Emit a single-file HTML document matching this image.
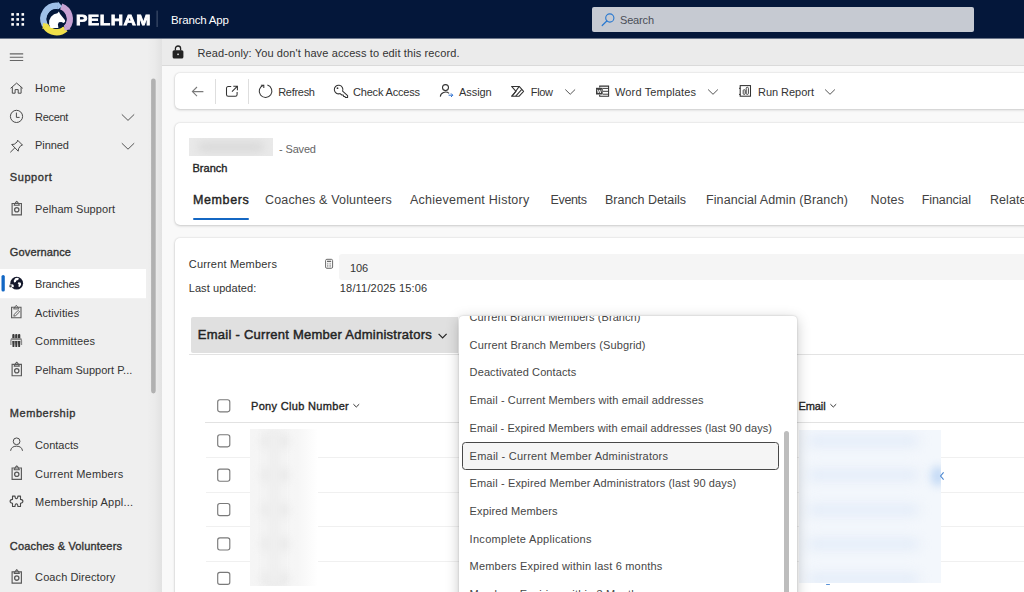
<!DOCTYPE html>
<html lang="en"><head><meta charset="utf-8"><title>Branch App</title>
<style>
html,body{margin:0;padding:0;}
body{width:1024px;height:592px;overflow:hidden;position:relative;background:#f9f9f9;font-family:"Liberation Sans",sans-serif;}
#root{position:absolute;left:0;top:0;width:1024px;height:592px;overflow:hidden;}
.t{position:absolute;white-space:pre;}
.a{position:absolute;}
.card{position:absolute;background:#fff;border-radius:5px;box-shadow:0 0 2px rgba(0,0,0,.14),0 1px 3px rgba(0,0,0,.16);}
svg{position:absolute;overflow:visible;}
.hl{position:absolute;height:1px;background:#f0f0f0;}
</style></head><body><div id="root">

<!-- main background areas -->
<div class="a" style="left:0;top:38px;width:161.5px;height:554px;background:#efefef;"></div>
<div class="a" style="left:147px;top:39px;width:14.5px;height:553px;background:linear-gradient(90deg,#efefef,#ebebeb 50%,#e2e2e2);"></div>
<div class="a" style="left:161.5px;top:38px;width:863px;height:27px;background:#ebebeb;border-bottom:1px solid #dadada;"></div>

<!-- top bar -->
<div class="a" style="left:0;top:0;width:1024px;height:38px;background:#04173a;"></div><div class="a" style="left:0;top:38px;width:1024px;height:1px;background:#6a7589;"></div>
<svg style="left:0;top:0" width="160" height="39" viewBox="0 0 160 39">
 <g fill="#fff">
  <rect x="11.3" y="13.1" width="2.6" height="2.6"/><rect x="16.4" y="13.1" width="2.6" height="2.6"/><rect x="21.5" y="13.1" width="2.6" height="2.6"/>
  <rect x="11.3" y="18.1" width="2.6" height="2.6"/><rect x="16.4" y="18.1" width="2.6" height="2.6"/><rect x="21.5" y="18.1" width="2.6" height="2.6"/>
  <rect x="11.3" y="23.1" width="2.6" height="2.6"/><rect x="16.4" y="23.1" width="2.6" height="2.6"/><rect x="21.5" y="23.1" width="2.6" height="2.6"/>
 </g>
 
<g fill="none" stroke-width="6.4">
 <path d="M44.95 25.20A13.2 13.2 0 0 1 57.98 5.87" stroke="#9fc0e8"/>
 <path d="M61.11 6.60A13.2 13.2 0 0 1 67.00 27.13" stroke="#c7a2d3"/>
 <path d="M65.43 28.81A13.2 13.2 0 0 1 45.66 26.38" stroke="#efe04a"/>
</g>
<path d="M57.83 1.44L62.11 6.15L57.21 10.22Z" fill="#9fc0e8"/>
<path d="M70.84 29.35L64.58 30.48L63.72 24.17Z" fill="#c7a2d3"/>
<path d="M42.36 29.35L43.22 23.04L49.48 24.17Z" fill="#efe04a"/>
<circle cx="56.6" cy="19" r="9.9" fill="#04173a"/>
<path d="M58.9 11.4L60.1 14L64.9 20.1L65.2 21.6L63.8 22.9L61.3 22.1L58.9 22.3L57.9 24.2L58.4 28L50.6 28L49.1 24.4L49.2 20.4L51 16.8L54 14.2L57.4 13.3Z" fill="#fff"/>

 <rect x="156.6" y="10.6" width="1" height="16.4" fill="#4a5873"/>
</svg>
<svg style="left:172px;top:45px" width="12" height="14" viewBox="0 0 12 14"><rect x=".6" y="5.2" width="10.8" height="8.4" rx="1.6" fill="#222"/><path d="M3.4 5.6V3.6a2.6 2.6 0 0 1 5.2 0V5.6" fill="none" stroke="#222" stroke-width="1.3"/><rect x="5.3" y="8.6" width="1.5" height="1.5" fill="#ebebeb"/></svg>
<!-- search -->
<div class="a" style="left:592px;top:7px;width:381.5px;height:25px;background:#c6cad2;border-radius:2px;"></div>
<svg style="left:600px;top:12px" width="16" height="16" viewBox="0 0 16 16"><circle cx="9.8" cy="6" r="4.1" fill="none" stroke="#2878d0" stroke-width="1.1"/><path d="M6.8 9 L2.2 13.5" stroke="#2878d0" stroke-width="1.2" stroke-linecap="round"/></svg>

<!-- nav -->
<svg style="left:0;top:39px" width="161" height="553" viewBox="0 39 161 553">
 <g stroke="#666" stroke-width="1.1" fill="none">
  <path d="M9.8 53.9H23.2M9.8 57.2H23.2M9.8 60.5H23.2"/>
 </g>
 <!-- selected row -->
 <rect x="0" y="269" width="146" height="29.2" fill="#fff"/>
 <rect x="1.5" y="275" width="3.3" height="16.6" rx="1.6" fill="#1267c4"/>
 <!-- scrollbar -->
 <rect x="151.1" y="78.4" width="4.6" height="315" rx="2.3" fill="#b1b1b1"/>
 
<g fill="none" stroke="#4a4a4a" stroke-width="1" stroke-linejoin="round">
<!-- home -->
<path d="M10.6 88.3L16.6 83.1L22.7 88.3"/>
<path d="M12.3 87.2V93.2H15.1V89.6H18.2V93.2H21.1V87.2"/>
<!-- clock -->
<circle cx="16.5" cy="116.4" r="6.1"/>
<path d="M16.4 112.6V117.4H19.6"/>
<!-- pin -->
<path d="M17.6 140.2L22.5 145.1L20.8 145.6L18.6 148.6L18.2 151.2L11.7 144.5L14.3 144.2L17.2 141.9Z"/>
<path d="M14.8 147.9L10.3 152.3"/>
</g>
<path d="M121.80 114.40L128.00 120.40L134.20 114.40" fill="none" stroke="#555" stroke-width="1"/>
<path d="M121.80 143.20L128.00 149.20L134.20 143.20" fill="none" stroke="#555" stroke-width="1"/>
<g fill="none" stroke="#5a5a5a" stroke-width="1.15" stroke-linejoin="miter">
<path d="M12.1 203.50V214.80H21.4V203.50Z"/>
<path d="M13.7 205.20H19.8M14.2 205.00L15.5 202.70L16.75 201.30L18 202.70L19.3 205.00" stroke-linejoin="round" stroke-width="1.05"/>
<circle cx="16.75" cy="209.80" r="2.15" stroke-width="1.3"/>
</g>
<g fill="none" stroke="#5a5a5a" stroke-width="1.15" stroke-linejoin="miter">
<path d="M12.1 364.40V375.70H21.4V364.40Z"/>
<path d="M13.7 366.10H19.8M14.2 365.90L15.5 363.60L16.75 362.20L18 363.60L19.3 365.90" stroke-linejoin="round" stroke-width="1.05"/>
<circle cx="16.75" cy="370.70" r="2.15" stroke-width="1.3"/>
</g>
<g fill="none" stroke="#5a5a5a" stroke-width="1.15" stroke-linejoin="miter">
<path d="M12.1 468.00V479.30H21.4V468.00Z"/>
<path d="M13.7 469.70H19.8M14.2 469.50L15.5 467.20L16.75 465.80L18 467.20L19.3 469.50" stroke-linejoin="round" stroke-width="1.05"/>
<circle cx="16.75" cy="474.30" r="2.15" stroke-width="1.3"/>
</g>
<g fill="none" stroke="#5a5a5a" stroke-width="1.15" stroke-linejoin="miter">
<path d="M12.1 571.80V583.10H21.4V571.80Z"/>
<path d="M13.7 573.50H19.8M14.2 573.30L15.5 571.00L16.75 569.60L18 571.00L19.3 573.30" stroke-linejoin="round" stroke-width="1.05"/>
<circle cx="16.75" cy="578.10" r="2.15" stroke-width="1.3"/>
</g>
<!-- globe -->
<circle cx="16.7" cy="283.2" r="6.4" fill="#14182b"/>
<path d="M15.2 278.3l2.2-.6 1.6.9-.9 1.5-1.7.5-.6 1.5-1.7.3-.4-1.6zM18.6 282.2l2.2.5.3 2-1.5 2.3-1.2-.6.3-1.9-1-1.2zM11.2 284.2l2 .4.8 1.7-1 1.1-1.5-1z" fill="#fff"/>
<path d="M9.6 284.6l1.5 1.2-.3 1.8-1.4-.6z" fill="#333"/>
<!-- activities -->
<g fill="none" stroke="#5a5a5a" stroke-width="1.1" stroke-linejoin="round">
<path d="M11.6 307.3V317.8H21V307.3Z" stroke-linejoin="miter"/>
<path d="M13.4 308.9H19.2M13.9 308.7L15.2 306.6L16.3 305.3L17.4 306.6L18.7 308.7" stroke-width="1"/>
<path d="M13.8 316.2l.5-1.9 3.9-3.9 1.4 1.4-3.9 3.9z" stroke-width=".95"/>
</g>
<!-- committees -->
<g fill="#3a3a3a">
<rect x="12.3" y="334" width="2.3" height="4.8" rx=".9"/><rect x="15.15" y="334" width="2.3" height="4.8" rx=".9"/><rect x="18" y="334" width="2.3" height="4.8" rx=".9"/>
<path d="M12.2 340.9h2.5l-.35 6h-1.8zM15.05 340.9h2.5l-.35 6h-1.8zM17.9 340.9h2.5l-.35 6h-1.8z"/>
</g>
<path d="M10.9 345V340.4a1.6 1.6 0 0 1 1.6-1.6H19.9a1.6 1.6 0 0 1 1.6 1.6V345" fill="none" stroke="#8c8c8c" stroke-width="1.3"/>
<rect x="11" y="338.3" width="10.4" height="1.8" fill="#8c8c8c"/>
<!-- person -->
<g fill="none" stroke="#4a4a4a" stroke-width="1">
<circle cx="16.6" cy="441.3" r="3.35"/>
<path d="M10.6 450.8a6 5.3 0 0 1 11.9 0"/>
<!-- puzzle -->
<path d="M12.5 496.1H15Q15 498.7 16.4 498.8Q17.9 498.7 17.9 496.1H20.5V499.4Q22.9 499.5 22.9 501.3Q22.9 503.1 20.5 503.2V506.5H17.9Q17.9 503.9 16.4 503.8Q15 503.9 15 506.5H12.5V503.2Q10.1 503.1 10.1 501.3Q10.1 499.5 12.5 499.4Z" stroke-linejoin="round" stroke-width="1.1"/>
</g>

</svg>

<!-- command bar -->
<div class="card" style="left:174.5px;top:72.7px;width:870px;height:36.2px;"></div>
<div class="a" style="left:215.3px;top:78.5px;width:1px;height:25.5px;background:#dedede;"></div>
<div class="a" style="left:248px;top:78.5px;width:1px;height:25.5px;background:#dedede;"></div>
<svg style="left:161px;top:72px" width="863" height="38" viewBox="161 72 863 38">

<g fill="none" stroke="#7a7a7a" stroke-width="1.1"><path d="M203.4 91.6H192.4M197 87L192.4 91.6L197 96.2"/></g>
<g fill="none" stroke="#333" stroke-width="1.05">
<!-- popout -->
<path d="M231.2 86.5H228.2a1.7 1.7 0 0 0-1.7 1.7V94.6a1.7 1.7 0 0 0 1.7 1.7H235.4a1.7 1.7 0 0 0 1.7-1.7V92"/>
<path d="M233.3 86.2H237.4V90.3M237.2 86.4L232 91.6"/>
<!-- refresh -->
<path d="M267.4 85.1A6.35 6.35 0 1 1 263.4 85.2"/>
<path d="M260.9 85.3H263.8V88.1"/>
<!-- key -->
<path d="M340.1 93.6A4.3 4.3 0 1 1 342.6 91.2L347.6 95.6V97.4H345.4L344.9 96.4H343.6L343.2 95H341.8Z" stroke-linejoin="round"/>
<circle cx="337.5" cy="88.2" r=".9" fill="#333" stroke="none"/>
<!-- assign -->
<circle cx="445.5" cy="87.6" r="3"/>
<path d="M440.3 96.6a5.3 4.7 0 0 1 8.8-3.3"/>
<!-- flow -->
<path d="M511.6 86.4H519.2L523.6 91.3L519.2 96.2H511.6L516 91.3Z" stroke-linejoin="round"/>
<path d="M519.2 86.4L512.4 96M521.8 89.3L515.7 96.2"/>
<!-- word -->
<path d="M599.7 87.6V86.1H608.6V96.2H599.7V94.7" stroke-linejoin="miter"/>
<path d="M603 88.4H608.4M603 91.3H608.4M603 94.2H608.4" stroke-width=".95"/>
<rect x="596" y="87.8" width="6.7" height="6.7" fill="#3c3c3c" stroke="none"/>
<path d="M597.3 89.6l.9 3.4 1.1-3.1 1.1 3.1.9-3.4" stroke="#fff" stroke-width=".8" stroke-linejoin="round"/>
<!-- report -->
<rect x="740.2" y="85.6" width="10.3" height="10.6"/>
<path d="M739 88.3H740.4M739 94.4H740.4" stroke-width="1"/>
<rect x="743.2" y="89.7" width="2" height="4.7" rx=".9" stroke-width=".9"/><rect x="746.2" y="87.3" width="2.2" height="7.1" rx="1" stroke-width=".9"/>
</g>
<path d="M448.6 95.2H452.6M451 93.4L452.8 95.2L451 97" fill="none" stroke="#2b6fd0" stroke-width="1"/>
<path d="M565.30 89.50L570.20 94.30L575.10 89.50" fill="none" stroke="#555" stroke-width="1"/>
<path d="M708.10 89.50L713.00 94.30L717.90 89.50" fill="none" stroke="#555" stroke-width="1"/>
<path d="M825.10 89.50L830.00 94.30L834.90 89.50" fill="none" stroke="#555" stroke-width="1"/>

</svg>

<!-- header card -->
<div class="card" style="left:174.5px;top:122.5px;width:870px;height:102px;"></div>
<div class="a" style="left:188.7px;top:138.1px;width:84.8px;height:17.5px;background:#e9e9e9;overflow:hidden;"><div class="a" style="left:9px;top:4px;width:66px;height:9.5px;background:#d9d9d9;filter:blur(4px);border-radius:6px;"></div></div>
<div class="a" style="left:193px;top:217.9px;width:56px;height:2.6px;background:#1467c3;border-radius:1.3px;"></div>

<!-- body card -->
<div class="card" style="left:174.5px;top:238.3px;width:870px;height:380px;"></div>
<div class="a" style="left:339.3px;top:254.1px;width:700px;height:25.6px;background:#f5f5f5;border-radius:3px;"></div>
<svg style="left:324px;top:258px" width="12" height="12" viewBox="0 0 12 12"><rect x="1.6" y="1.3" width="7" height="9" rx="1.3" fill="none" stroke="#6a6a6a" stroke-width="1"/><rect x="3" y="2.7" width="4.2" height="1.4" fill="#6a6a6a"/><path d="M3.1 5.8h.9M4.65 5.8h.9M6.2 5.8h.9M3.1 7.3h.9M4.65 7.3h.9M6.2 7.3h.9M3.1 8.8h.9M4.65 8.8h.9M6.2 8.8h.9" stroke="#6a6a6a" stroke-width=".8"/></svg>
<div class="a" style="left:191.1px;top:317px;width:266.7px;height:35.5px;background:#e0e0e0;border-radius:2px 0 0 2px;"></div>
<svg style="left:436px;top:329px" width="13" height="13" viewBox="0 0 13 13"><path d="M2.6 4.8 L6.6 8.8 L10.6 4.8" fill="none" stroke="#242424" stroke-width="1.2"/></svg>
<div class="hl" style="left:189px;top:354.1px;width:840px;background:#e3e3e3;"></div>

<!-- grid -->
<svg style="left:352px;top:401px" width="9" height="9" viewBox="0 0 9 9"><path d="M1.4 3.2 L4.3 6 L7.2 3.2" fill="none" stroke="#333" stroke-width="1"/></svg>
<svg style="left:829px;top:401px" width="9" height="9" viewBox="0 0 9 9"><path d="M1.4 3.2 L4.3 6 L7.2 3.2" fill="none" stroke="#333" stroke-width="1"/></svg>
<div class="hl" style="left:205px;top:422.3px;width:830px;background:#e2e2e2;"></div>
<div class="hl" style="left:206px;top:457.4px;width:830px;"></div>
<div class="hl" style="left:206px;top:491.8px;width:830px;"></div>
<div class="hl" style="left:206px;top:526.2px;width:830px;"></div>
<div class="hl" style="left:206px;top:560.6px;width:830px;"></div>
<svg style="left:0;top:0" width="1024" height="592" viewBox="0 0 1024 592"><rect x="217.7" y="399.7" width="12.1" height="12.1" rx="2.2" fill="#fff" stroke="#7a7a7a" stroke-width="1.15"/><rect x="217.7" y="434.7" width="12.1" height="12.1" rx="2.2" fill="#fff" stroke="#7a7a7a" stroke-width="1.15"/><rect x="217.7" y="469.1" width="12.1" height="12.1" rx="2.2" fill="#fff" stroke="#7a7a7a" stroke-width="1.15"/><rect x="217.7" y="503.5" width="12.1" height="12.1" rx="2.2" fill="#fff" stroke="#7a7a7a" stroke-width="1.15"/><rect x="217.7" y="537.9" width="12.1" height="12.1" rx="2.2" fill="#fff" stroke="#7a7a7a" stroke-width="1.15"/><rect x="217.7" y="572.3" width="12.1" height="12.1" rx="2.2" fill="#fff" stroke="#7a7a7a" stroke-width="1.15"/></svg>
<!-- blurred columns -->
<div class="a" style="left:249.6px;top:429.3px;width:68px;height:157px;background:linear-gradient(90deg,#f5f5f5 0,#f6f6f6 70%,#fcfcfc 90%,#fff 100%);overflow:hidden;">
<div class="a" style="left:12px;top:4.7px;width:26px;height:14px;border-radius:7px;background:#e6e6e6;filter:blur(4px);"></div>
<div class="a" style="left:12px;top:39.1px;width:26px;height:14px;border-radius:7px;background:#e6e6e6;filter:blur(4px);"></div>
<div class="a" style="left:12px;top:73.5px;width:26px;height:14px;border-radius:7px;background:#e6e6e6;filter:blur(4px);"></div>
<div class="a" style="left:12px;top:107.9px;width:26px;height:14px;border-radius:7px;background:#e6e6e6;filter:blur(4px);"></div>
<div class="a" style="left:12px;top:142.3px;width:26px;height:14px;border-radius:7px;background:#e6e6e6;filter:blur(4px);"></div>
<div class="a" style="left:16px;top:0;width:16px;height:157px;background:#efefef;filter:blur(5px);"></div>
</div>
<div class="a" style="left:798.7px;top:430.2px;width:142px;height:153.2px;background:#f3f7fc;overflow:hidden;">
<div class="a" style="left:8px;top:5.8px;width:112px;height:10px;border-radius:5px;background:#e2ebf8;filter:blur(6px);"></div>
<div class="a" style="left:8px;top:40.2px;width:112px;height:10px;border-radius:5px;background:#e2ebf8;filter:blur(6px);"></div>
<div class="a" style="left:8px;top:74.6px;width:112px;height:10px;border-radius:5px;background:#e2ebf8;filter:blur(6px);"></div>
<div class="a" style="left:8px;top:109.0px;width:112px;height:10px;border-radius:5px;background:#e2ebf8;filter:blur(6px);"></div>
<div class="a" style="left:8px;top:143.4px;width:112px;height:10px;border-radius:5px;background:#e2ebf8;filter:blur(6px);"></div>
<div class="a" style="left:132px;top:36px;width:14px;height:20px;border-radius:7px;background:#c4daf5;filter:blur(4px);"></div>
</div>
<svg style="left:938px;top:470px" width="8" height="12" viewBox="0 0 8 12"><path d="M5.6 2.4L2.6 6L5.6 9.6" fill="none" stroke="#4a86d0" stroke-width="1.1"/></svg>
<div class="a" style="left:826px;top:583.6px;width:4px;height:1.4px;background:#5b93d8;border-radius:1px;"></div>

<span class="t" style="left:76.00px;top:9.00px;font-size:15.5px;line-height:21px;font-weight:700;color:#fff;letter-spacing:0.455px;-webkit-text-stroke:0.8px #fff;transform-origin:0 50%;transform:scaleX(1.1);">PELHAM</span>
<span class="t" style="left:171.00px;top:12.00px;font-size:11.5px;line-height:16px;font-weight:400;color:#fff;letter-spacing:-0.163px;">Branch App</span>
<span class="t" style="left:620.00px;top:13.00px;font-size:11px;line-height:15px;font-weight:400;color:#4a4e58;letter-spacing:-0.172px;">Search</span>
<span class="t" style="left:197.40px;top:46.00px;font-size:11px;line-height:15px;font-weight:400;color:#333;letter-spacing:0.120px;">Read-only: You don't have access to edit this record.</span>
<span class="t" style="left:278.20px;top:85.00px;font-size:11px;line-height:15px;font-weight:400;color:#333;letter-spacing:-0.289px;">Refresh</span>
<span class="t" style="left:353.00px;top:85.00px;font-size:11px;line-height:15px;font-weight:400;color:#333;letter-spacing:-0.190px;">Check Access</span>
<span class="t" style="left:459.00px;top:85.00px;font-size:11px;line-height:15px;font-weight:400;color:#333;letter-spacing:-0.056px;">Assign</span>
<span class="t" style="left:530.75px;top:85.00px;font-size:11px;line-height:15px;font-weight:400;color:#333;letter-spacing:-0.328px;">Flow</span>
<span class="t" style="left:615.00px;top:85.00px;font-size:11px;line-height:15px;font-weight:400;color:#333;letter-spacing:0.148px;">Word Templates</span>
<span class="t" style="left:758.00px;top:85.00px;font-size:11px;line-height:15px;font-weight:400;color:#333;letter-spacing:-0.030px;">Run Report</span>
<span class="t" style="left:279.10px;top:142.00px;font-size:11px;line-height:15px;font-weight:400;color:#666;letter-spacing:-0.170px;">- Saved</span>
<span class="t" style="left:192.40px;top:161.00px;font-size:11px;line-height:15px;font-weight:400;color:#242424;letter-spacing:0.048px;-webkit-text-stroke:0.35px currentColor;">Branch</span>
<span class="t" style="left:193.00px;top:192.00px;font-size:12.5px;line-height:17px;font-weight:400;color:#242424;letter-spacing:0.609px;-webkit-text-stroke:0.4px currentColor;">Members</span>
<span class="t" style="left:265.00px;top:192.00px;font-size:12.5px;line-height:17px;font-weight:400;color:#424242;letter-spacing:0.160px;">Coaches &amp; Volunteers</span>
<span class="t" style="left:410.00px;top:192.00px;font-size:12.5px;line-height:17px;font-weight:400;color:#424242;letter-spacing:0.257px;">Achievement History</span>
<span class="t" style="left:550.50px;top:192.00px;font-size:12.5px;line-height:17px;font-weight:400;color:#424242;letter-spacing:-0.344px;">Events</span>
<span class="t" style="left:605.00px;top:192.00px;font-size:12.5px;line-height:17px;font-weight:400;color:#424242;letter-spacing:-0.023px;">Branch Details</span>
<span class="t" style="left:706.00px;top:192.00px;font-size:12.5px;line-height:17px;font-weight:400;color:#424242;letter-spacing:0.102px;">Financial Admin (Branch)</span>
<span class="t" style="left:870.50px;top:192.00px;font-size:12.5px;line-height:17px;font-weight:400;color:#424242;letter-spacing:0.211px;">Notes</span>
<span class="t" style="left:921.75px;top:192.00px;font-size:12.5px;line-height:17px;font-weight:400;color:#424242;letter-spacing:-0.098px;">Financial</span>
<span class="t" style="left:990.00px;top:192.00px;font-size:12.5px;line-height:17px;font-weight:400;color:#424242;letter-spacing:0.068px;">Related</span>
<span class="t" style="left:188.75px;top:257.00px;font-size:11px;line-height:15px;font-weight:400;color:#333;letter-spacing:0.184px;">Current Members</span>
<span class="t" style="left:350.00px;top:261.00px;font-size:11px;line-height:15px;font-weight:400;color:#333;letter-spacing:-0.180px;">106</span>
<span class="t" style="left:188.75px;top:281.00px;font-size:11px;line-height:15px;font-weight:400;color:#333;letter-spacing:0.069px;">Last updated:</span>
<span class="t" style="left:339.80px;top:281.00px;font-size:11px;line-height:15px;font-weight:400;color:#333;letter-spacing:0.175px;">18/11/2025 15:06</span>
<span class="t" style="left:197.80px;top:326.00px;font-size:13px;line-height:18px;font-weight:400;color:#242424;letter-spacing:0.258px;-webkit-text-stroke:0.45px currentColor;">Email - Current Member Administrators</span>
<span class="t" style="left:251.00px;top:399.00px;font-size:11px;line-height:15px;font-weight:400;color:#242424;letter-spacing:0.321px;-webkit-text-stroke:0.35px currentColor;">Pony Club Number</span>
<span class="t" style="left:798.50px;top:399.00px;font-size:11px;line-height:15px;font-weight:400;color:#242424;letter-spacing:-0.104px;-webkit-text-stroke:0.35px currentColor;">Email</span>
<span class="t" style="left:35.10px;top:81.00px;font-size:11px;line-height:15px;font-weight:400;color:#333;letter-spacing:0.285px;">Home</span>
<span class="t" style="left:35.10px;top:110.00px;font-size:11px;line-height:15px;font-weight:400;color:#333;letter-spacing:-0.312px;">Recent</span>
<span class="t" style="left:35.10px;top:138.00px;font-size:11px;line-height:15px;font-weight:400;color:#333;letter-spacing:-0.073px;">Pinned</span>
<span class="t" style="left:9.80px;top:170.00px;font-size:11px;line-height:15px;font-weight:400;color:#333;letter-spacing:0.578px;-webkit-text-stroke:0.35px currentColor;">Support</span>
<span class="t" style="left:35.10px;top:202.00px;font-size:11px;line-height:15px;font-weight:400;color:#333;letter-spacing:0.078px;">Pelham Support</span>
<span class="t" style="left:9.80px;top:245.00px;font-size:11px;line-height:15px;font-weight:400;color:#333;letter-spacing:0.140px;-webkit-text-stroke:0.35px currentColor;">Governance</span>
<span class="t" style="left:35.10px;top:277.00px;font-size:11px;line-height:15px;font-weight:400;color:#333;letter-spacing:-0.255px;">Branches</span>
<span class="t" style="left:35.10px;top:306.00px;font-size:11px;line-height:15px;font-weight:400;color:#333;letter-spacing:0.088px;">Activities</span>
<span class="t" style="left:35.10px;top:334.00px;font-size:11px;line-height:15px;font-weight:400;color:#333;letter-spacing:0.135px;">Committees</span>
<span class="t" style="left:35.10px;top:363.00px;font-size:11px;line-height:15px;font-weight:400;color:#333;letter-spacing:0.009px;">Pelham Support P...</span>
<span class="t" style="left:9.80px;top:406.00px;font-size:11px;line-height:15px;font-weight:400;color:#333;letter-spacing:0.552px;-webkit-text-stroke:0.35px currentColor;">Membership</span>
<span class="t" style="left:35.10px;top:438.00px;font-size:11px;line-height:15px;font-weight:400;color:#333;letter-spacing:0.011px;">Contacts</span>
<span class="t" style="left:35.10px;top:467.00px;font-size:11px;line-height:15px;font-weight:400;color:#333;letter-spacing:0.180px;">Current Members</span>
<span class="t" style="left:35.10px;top:495.00px;font-size:11px;line-height:15px;font-weight:400;color:#333;letter-spacing:0.220px;">Membership Appl...</span>
<span class="t" style="left:9.80px;top:539.00px;font-size:11px;line-height:15px;font-weight:400;color:#333;letter-spacing:0.176px;-webkit-text-stroke:0.35px currentColor;">Coaches &amp; Volunteers</span>
<span class="t" style="left:35.10px;top:570.00px;font-size:11px;line-height:15px;font-weight:400;color:#333;letter-spacing:0.089px;">Coach Directory</span>


<!-- popup -->
<div class="a" style="left:459.2px;top:315.5px;width:337.8px;height:300px;background:#fff;border-radius:4px;box-shadow:0 0 2px rgba(0,0,0,.22),0 3px 14px rgba(0,0,0,.22);overflow:hidden;">
 <div class="a" style="left:-459.2px;top:-315.5px;width:1024px;height:700px;">
  <div class="a" style="left:462.3px;top:442px;width:314.6px;height:26px;border:1px solid #484848;border-radius:3.5px;background:#f5f5f5;"></div>
  <div class="a" style="left:784.3px;top:430.7px;width:4.9px;height:200px;background:#bdbdbd;border-radius:2.5px;"></div>
<span class="t" style="left:469.60px;top:310.00px;font-size:11px;line-height:15px;font-weight:400;color:#464646;letter-spacing:0.072px;">Current Branch Members (Branch)</span>
<span class="t" style="left:469.60px;top:338.00px;font-size:11px;line-height:15px;font-weight:400;color:#464646;letter-spacing:0.132px;">Current Branch Members (Subgrid)</span>
<span class="t" style="left:469.60px;top:365.00px;font-size:11px;line-height:15px;font-weight:400;color:#464646;letter-spacing:0.112px;">Deactivated Contacts</span>
<span class="t" style="left:469.60px;top:393.00px;font-size:11px;line-height:15px;font-weight:400;color:#464646;letter-spacing:0.122px;">Email - Current Members with email addresses</span>
<span class="t" style="left:469.60px;top:421.00px;font-size:11px;line-height:15px;font-weight:400;color:#464646;letter-spacing:0.070px;">Email - Expired Members with email addresses (last 90 days)</span>
<span class="t" style="left:469.60px;top:449.00px;font-size:11px;line-height:15px;font-weight:400;color:#464646;letter-spacing:0.230px;">Email - Current Member Administrators</span>
<span class="t" style="left:469.60px;top:476.00px;font-size:11px;line-height:15px;font-weight:400;color:#464646;letter-spacing:0.135px;">Email - Expired Member Administrators (last 90 days)</span>
<span class="t" style="left:469.60px;top:504.00px;font-size:11px;line-height:15px;font-weight:400;color:#464646;letter-spacing:0.121px;">Expired Members</span>
<span class="t" style="left:469.60px;top:532.00px;font-size:11px;line-height:15px;font-weight:400;color:#464646;letter-spacing:0.287px;">Incomplete Applications</span>
<span class="t" style="left:469.60px;top:559.00px;font-size:11px;line-height:15px;font-weight:400;color:#464646;letter-spacing:0.195px;">Members Expired within last 6 months</span>
<span class="t" style="left:469.60px;top:587.00px;font-size:11px;line-height:15px;font-weight:400;color:#464646;letter-spacing:0.170px;">Members Expiring within 3 Months</span>

 </div>
</div>

</div></body></html>
